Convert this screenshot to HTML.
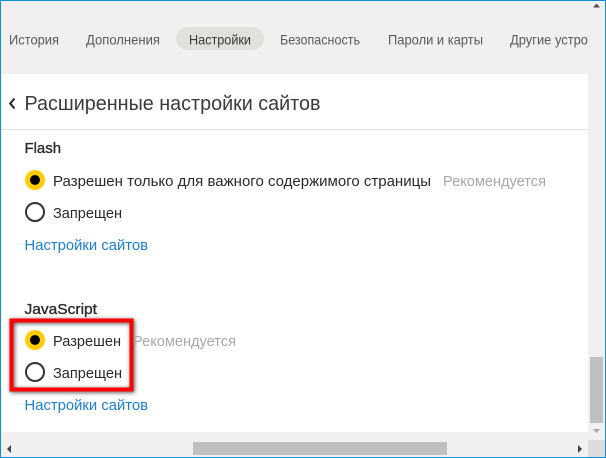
<!DOCTYPE html>
<html><head><meta charset="utf-8"><style>
html,body{margin:0;padding:0;width:606px;height:458px;overflow:hidden;background:#f1f0ee}
svg{display:block;font-family:"Liberation Sans",sans-serif}
</style></head><body>
<svg width="606" height="458" viewBox="0 0 606 458" xmlns="http://www.w3.org/2000/svg">
<defs><filter id="s" x="-20%" y="-20%" width="140%" height="140%"><feGaussianBlur stdDeviation="2.2"/></filter></defs>
<rect width="606" height="458" fill="#f1f0ee"/>
<rect x="1" y="74" width="587" height="358" fill="#fff"/>
<rect x="1" y="129" width="587" height="1" fill="#e4e4e4"/>
<rect x="176" y="27" width="88" height="23" rx="11.5" fill="#e1e0dd"/>
<g font-size="14" fill="#5a5a5a">
<text x="9" y="44.500" textLength="50" lengthAdjust="spacingAndGlyphs">История</text>
<text x="86" y="44.500" textLength="74" lengthAdjust="spacingAndGlyphs">Дополнения</text>
<text x="189" y="44.500" textLength="62" lengthAdjust="spacingAndGlyphs" fill="#3a3a3a">Настройки</text>
<text x="280" y="44.500" textLength="80" lengthAdjust="spacingAndGlyphs">Безопасность</text>
<text x="388" y="44.500" textLength="95" lengthAdjust="spacingAndGlyphs">Пароли и карты</text>
<text x="510" y="44.500" textLength="78" lengthAdjust="spacingAndGlyphs">Другие устро</text>
</g>
<path d="M14.500 98.500 L10.200 103.500 L14.500 108.500" fill="none" stroke="#222" stroke-width="2"/>
<text x="24.500" y="110" font-size="20" fill="#3a3a3a" textLength="296" lengthAdjust="spacingAndGlyphs">Расширенные настройки сайтов</text>
<g font-size="15" fill="#2a2a2a">
<text x="24.500" y="153" stroke="#2a2a2a" stroke-width="0.35" textLength="36.500" lengthAdjust="spacingAndGlyphs">Flash</text>
<text x="53" y="186" textLength="378" lengthAdjust="spacingAndGlyphs">Разрешен только для важного содержимого страницы</text>
<text x="443" y="186" fill="#a8a8a8" textLength="103" lengthAdjust="spacingAndGlyphs">Рекомендуется</text>
<text x="53" y="218" textLength="69" lengthAdjust="spacingAndGlyphs">Запрещен</text>
<text x="24.500" y="250" fill="#1a80d8" textLength="123.500" lengthAdjust="spacingAndGlyphs">Настройки сайтов</text>
<text x="24.500" y="314" stroke="#2a2a2a" stroke-width="0.35" textLength="72.500" lengthAdjust="spacingAndGlyphs">JavaScript</text>
</g>
<circle cx="35" cy="180" r="10" fill="#fc0"/><circle cx="35" cy="180" r="5" fill="#000"/>
<circle cx="35" cy="212" r="9" fill="#fff" stroke="#333" stroke-width="2"/>
<rect x="11.500" y="320.500" width="120" height="69" fill="none" stroke="#444" stroke-width="4" filter="url(#s)" transform="translate(1 1)"/>
<rect x="11.500" y="320.500" width="120" height="69" fill="none" stroke="#f00" stroke-width="4"/>
<circle cx="35" cy="340" r="10" fill="#fc0"/><circle cx="35" cy="340" r="5" fill="#000"/>
<circle cx="35" cy="372" r="9" fill="#fff" stroke="#333" stroke-width="2"/>
<g font-size="15" fill="#2a2a2a">
<text x="53" y="346" textLength="68" lengthAdjust="spacingAndGlyphs">Разрешен</text>
<text x="133" y="346" fill="#a8a8a8" textLength="103" lengthAdjust="spacingAndGlyphs">Рекомендуется</text>
<text x="53" y="378" textLength="69" lengthAdjust="spacingAndGlyphs">Запрещен</text>
<text x="24.500" y="410" fill="#1a80d8" textLength="123.500" lengthAdjust="spacingAndGlyphs">Настройки сайтов</text>
</g>
<rect x="590" y="357" width="13" height="66" fill="#c0c0c0"/>
<rect x="193" y="442" width="254" height="13" fill="#c0c0c0"/>
<rect x="588" y="440" width="17" height="17" fill="#dcdcdc"/>
<path d="M593 7.500h7l-3.500-4z" fill="#505050"/>
<path d="M593 429h7l-3.500 4z" fill="#a8a8a8"/>
<path d="M11 445v8l-4-4z" fill="#404040"/>
<path d="M578 445v8l4-4z" fill="#404040"/>
<rect x="0" y="0" width="606" height="1" fill="#0f8fd6"/>
<rect x="0" y="457" width="606" height="1" fill="#0f8fd6"/>
<rect x="0" y="0" width="1" height="458" fill="#0f8fd6"/>
<rect x="605" y="0" width="1" height="458" fill="#0f8fd6"/>
</svg>
</body></html>
